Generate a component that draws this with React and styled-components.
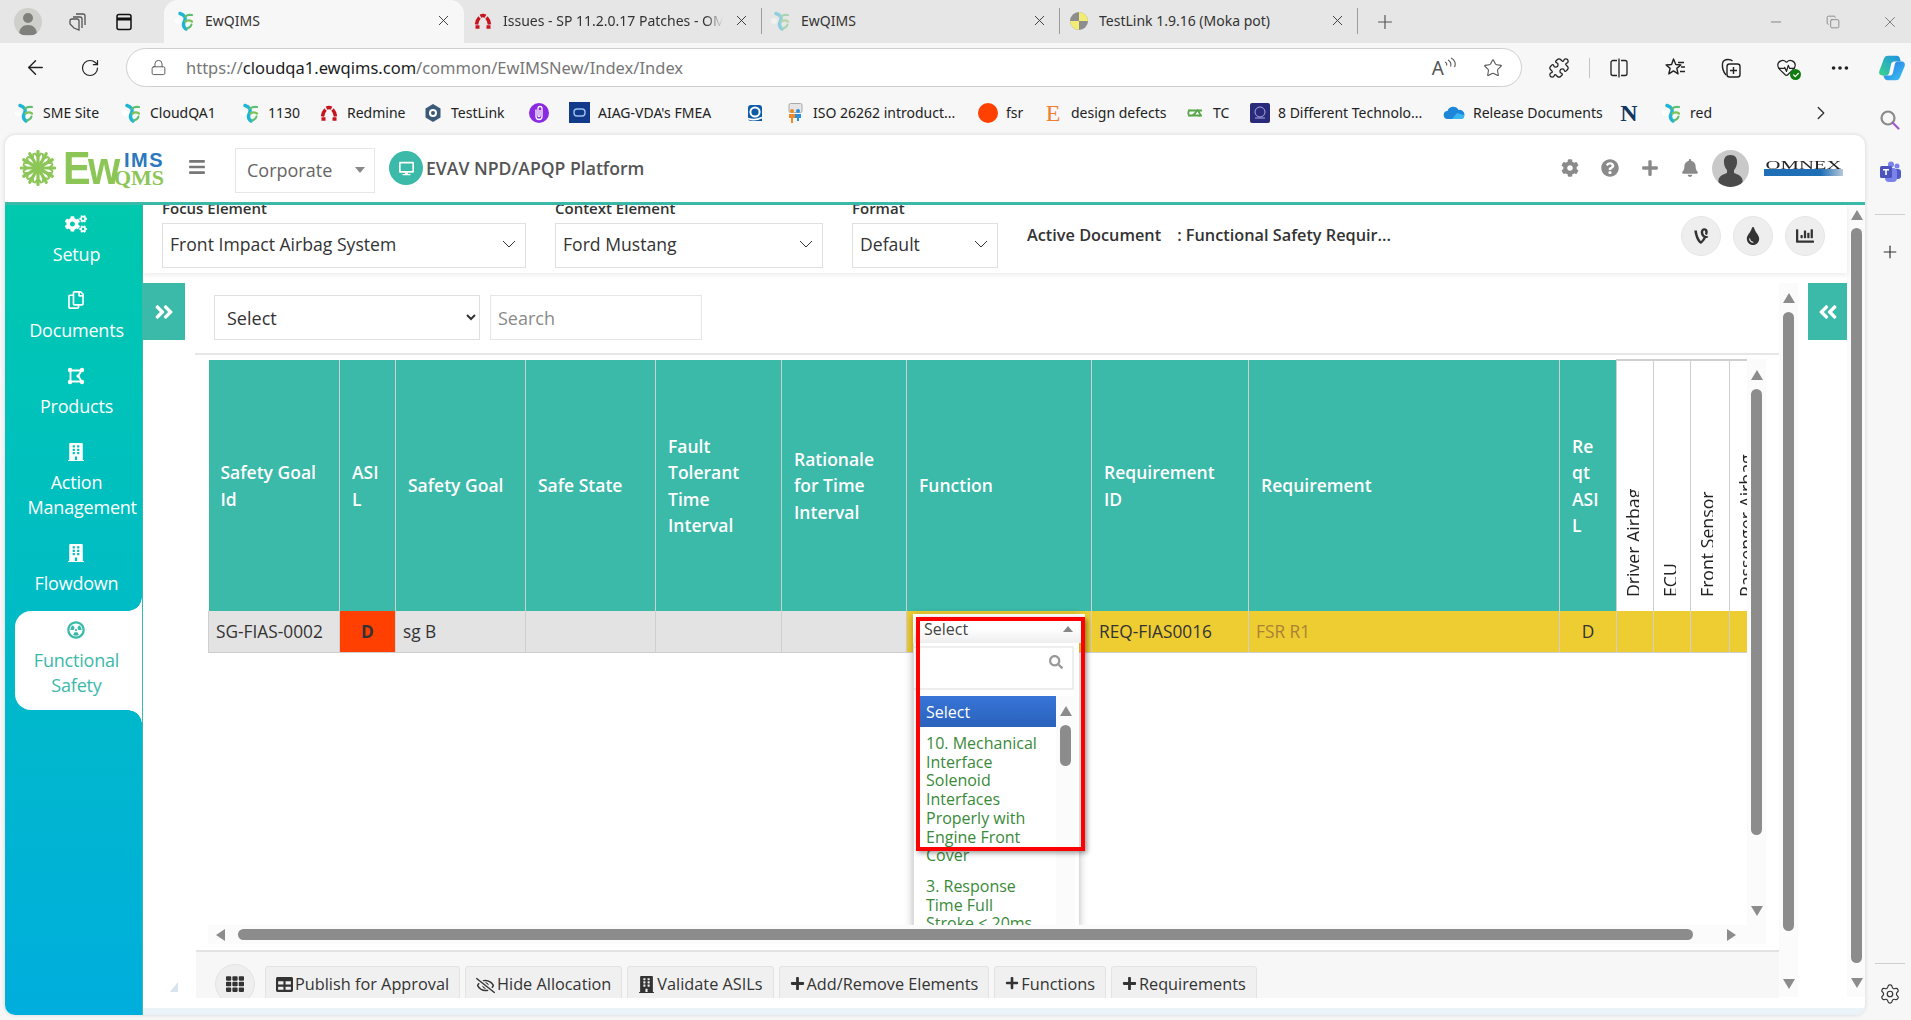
import React from "react";
import styled, { createGlobalStyle } from "styled-components";
import {
  ArrowLeft,
  RotateCw,
  Lock,
  Star,
  Puzzle,
  HeartPulse,
  MoreHorizontal,
  X,
  Plus,
  Minus,
  Copy,
  ChevronRight,
  Settings,
} from "lucide-react";
import {
  FaCogs,
  FaRegCopy,
  FaBuilding,
  FaRadiationAlt,
  FaAngleDoubleRight,
  FaAngleDoubleLeft,
  FaBars,
  FaDesktop,
  FaCog,
  FaQuestionCircle,
  FaPlus,
  FaBell,
  FaVine,
  FaTint,
  FaChartBar,
  FaTh,
  FaTable,
  FaRegEyeSlash,
  FaSearch,
  FaCheck,
} from "react-icons/fa";

const GlobalStyle = createGlobalStyle`
  html, body {
    margin: 0;
    padding: 0;
    background: #f7f7f7;
    overflow: hidden;
  }
  * { box-sizing: border-box; }
  body { font-family: "Open Sans", "Liberation Sans", sans-serif; }
`;

const TEAL = "#3bb9a9";

const Page = styled.div`
  width: 1911px;
  height: 1020px;
  display: flex;
  flex-direction: column;
  overflow: hidden;
  background: #f7f7f7;
`;

/* browser chrome */
const TabStrip = styled.div`
  height: 43px;
  display: flex;
  align-items: stretch;
  background: #e6e6e6;
  font-family: "Noto Sans", "Open Sans", sans-serif;
  font-size: 14px;
  color: #333;
`;
const StripTools = styled.div`
  width: 164px;
  display: flex;
  align-items: center;
  padding-left: 14px;
  gap: 24px;
  color: #555;
`;
const Avatar = styled.div`
  width: 28px;
  height: 28px;
  border-radius: 50%;
  background: #cfcfcb;
  display: flex;
  align-items: center;
  justify-content: center;
  overflow: hidden;
`;
const Tab = styled.div`
  width: ${(p) => (p.$active ? 300 : 298)}px;
  display: flex;
  align-items: center;
  padding: 0 12px 2px ${(p) => (p.$active ? 11 : 9)}px;
  gap: 10px;
  position: relative;
  background: ${(p) => (p.$active ? "#f7f7f7" : "transparent")};
  border-radius: ${(p) => (p.$active ? "14px 14px 0 0" : "0")};
  ${(p) =>
    p.$divider &&
    `
    &::after {
      content: "";
      position: absolute;
      right: 0;
      top: 8px;
      height: 26px;
      width: 1px;
      background: #9c9c9c;
    }
  `}
`;
const TabTitle = styled.div`
  flex: 1;
  white-space: nowrap;
  overflow: hidden;
  -webkit-mask-image: ${(p) => (p.$fade ? "linear-gradient(90deg, #000 92%, transparent)" : "none")};
`;
const Faded = styled.span`
  display: inline-flex;
  opacity: ${(p) => p.$opacity || 1};
`;
const NewTab = styled.div`
  display: flex;
  align-items: center;
  margin-left: 16px;
  color: #555;
`;
const WindowButtons = styled.div`
  margin-left: auto;
  display: flex;
  align-items: center;
  padding-right: 1px;
  gap: 17px;
  color: #7d7d7d;
`;
const WindowButton = styled.div`
  width: 40px;
  display: flex;
  justify-content: center;
`;

const AddressRow = styled.div`
  height: 51px;
  display: flex;
  align-items: flex-start;
  padding: 5px 0 0 22px;
  color: #222;
`;
const NavButton = styled.div`
  width: 26px;
  height: 39px;
  display: flex;
  align-items: center;
  justify-content: center;
  margin-left: ${(p) => p.$ml || 0}px;
`;
const UrlBar = styled.div`
  width: 1396px;
  height: 39px;
  margin-left: 23px;
  display: flex;
  align-items: center;
  padding: 0 18px 0 23px;
  background: #fff;
  border: 1px solid #cfcfcf;
  border-radius: 20px;
  font-family: "Noto Sans", "Open Sans", sans-serif;
  font-size: 16.5px;
  color: #777;
`;
const UrlText = styled.div`
  margin-left: 19px;
  flex: 1;
  white-space: nowrap;
  b { font-weight: 400; color: #1c1c1c; }
`;
const UrlAction = styled.div`
  display: flex;
  align-items: flex-start;
  margin-left: ${(p) => p.$ml || 0}px;
  color: #555;
  font-size: 19px;
  line-height: 22px;
`;
const ToolIcon = styled.div`
  width: 24px;
  height: 39px;
  display: flex;
  align-items: center;
  justify-content: center;
  position: relative;
  margin-left: ${(p) => p.$ml || 0}px;
  svg { flex: none; }
`;
const ToolDivider = styled.div`
  width: 1px;
  height: 20px;
  margin: 10px 17px 0 18px;
  background: #c4c4c4;
`;
const CheckBadge = styled.span`
  position: absolute;
  right: -3px;
  bottom: 7px;
  width: 11px;
  height: 11px;
  border-radius: 50%;
  background: #107c10;
  color: #fff;
  display: flex;
  align-items: center;
  justify-content: center;
  font-size: 6px;
`;

const BodyRow = styled.div`
  flex: 1;
  display: flex;
  min-height: 0;
`;
const LeftColumn = styled.div`
  width: 1865px;
  display: flex;
  flex-direction: column;
`;
const BookmarkBar = styled.div`
  height: 41px;
  display: flex;
  align-items: center;
  padding: 0 0 4px 15px;
  font-family: "Noto Sans", "Open Sans", sans-serif;
  font-size: 14px;
  color: #222;
`;
const Bookmark = styled.div`
  width: ${(p) => p.$w}px;
  display: flex;
  align-items: center;
  gap: 8px;
  white-space: nowrap;
`;
const BookmarkMore = styled.div`
  margin-left: 88px;
  display: flex;
  color: #333;
`;

const RightRail = styled.div`
  width: 46px;
  display: flex;
  flex-direction: column;
  align-items: center;
  padding: 15px 0 15px 4px;
`;
const RailIcon = styled.div`
  display: flex;
  margin-top: ${(p) => p.$mt || 0}px;
  color: #333;
`;
const RailRule = styled.div`
  width: 30px;
  height: 1px;
  background: #cfcfcf;
  margin-top: ${(p) => (p.$auto ? "auto" : "30px")};
  margin-bottom: ${(p) => (p.$auto ? "19px" : "0")};
`;

/* application window */
const AppWindow = styled.div`
  height: 880px;
  margin-left: 5px;
  background: #fff;
  border-radius: 10px;
  box-shadow: 0 0 4px rgba(0, 0, 0, 0.14);
  overflow: hidden;
  display: flex;
  flex-direction: column;
`;
const AppHeader = styled.header`
  height: 70px;
  flex: none;
  display: flex;
  align-items: center;
  padding-bottom: 1px;
  border-bottom: 3px solid ${TEAL};
`;
const Logo = styled.div`
  width: 150px;
  margin-left: 15px;
  display: flex;
  align-items: center;
`;
const LogoEw = styled.div`
  width: 53px;
  margin-left: 7px;
  font-family: "Liberation Sans", sans-serif;
  font-size: 46px;
  font-weight: 700;
  line-height: 40px;
  letter-spacing: -3px;
  color: #8cc657;
  transform: scaleX(0.9);
  transform-origin: left center;
`;
const LogoStack = styled.div`
  display: flex;
  flex-direction: column;
  align-items: flex-end;
  width: 48px;
  margin-top: 1px;
`;
const LogoIms = styled.div`
  font-family: "Liberation Sans", sans-serif;
  font-size: 20px;
  font-weight: 700;
  line-height: 17px;
  letter-spacing: 1.5px;
  color: #2b78bd;
`;
const LogoQms = styled.div`
  font-family: "Liberation Serif", serif;
  font-size: 22px;
  font-weight: 700;
  line-height: 17px;
  color: #8cc657;
  white-space: nowrap;
`;
const Hamburger = styled.div`
  display: flex;
  margin: -2px 0 0 18px;
  color: #777;
  font-size: 18px;
`;
const CorporateSelect = styled.div`
  width: 140px;
  height: 45px;
  margin: 4px 0 0 29px;
  display: flex;
  align-items: center;
  justify-content: space-between;
  padding: 0 9px 0 11px;
  border: 1px solid #e6e6e6;
  font-size: 18px;
  color: #666;
`;
const Caret = styled.span`
  width: 0;
  height: 0;
  border-left: 5px solid transparent;
  border-right: 5px solid transparent;
  border-top: 6px solid #888;
`;
const PlatformIcon = styled.div`
  width: 34px;
  height: 34px;
  margin-left: 14px;
  border-radius: 50%;
  background: ${TEAL};
  color: #fff;
  display: flex;
  align-items: center;
  justify-content: center;
  font-size: 15px;
`;
const PlatformName = styled.div`
  margin-left: 3px;
  font-size: 17.6px;
  font-weight: 600;
  color: #555;
  white-space: nowrap;
`;
const HeaderTools = styled.div`
  margin-left: auto;
  display: flex;
  align-items: center;
  padding-right: 22px;
  color: #8a8a8a;
`;
const HeaderTool = styled.div`
  width: 40px;
  display: flex;
  justify-content: center;
  font-size: 18px;
`;
const UserPic = styled.div`
  width: 37px;
  height: 37px;
  margin: 0 15px 0 2px;
  border-radius: 50%;
  background: #c9c9c9;
  overflow: hidden;
  display: flex;
`;
const Omnex = styled.div`
  width: 79px;
  display: flex;
  flex-direction: column;
  align-items: stretch;
`;
const OmnexName = styled.div`
  font-family: "Liberation Serif", serif;
  font-size: 11.5px;
  line-height: 8px;
  color: #222;
  text-align: center;
  white-space: nowrap;
  transform: scaleX(1.8);
`;
const OmnexBar = styled.div`
  height: 7px;
  flex: none;
  background: linear-gradient(90deg, #1f6fb7 72%, #b7c9d8);
`;

const AppBody = styled.div`
  flex: 1;
  min-height: 0;
  display: flex;
`;

/* sidebar */
const Sidebar = styled.nav`
  width: 138px;
  flex: none;
  display: flex;
  flex-direction: column;
  background: linear-gradient(180deg, #00c9ae 0%, #00aedd 100%);
  border-right: 1px solid ${TEAL};
  color: #fff;
`;
const NavItem = styled.div`
  position: relative;
  display: flex;
  flex-direction: column;
  align-items: center;
  padding: 9px 16px ${(p) => (p.$active ? 12 : 14)}px 22px;
  margin-left: ${(p) => (p.$active ? 10 : 0)}px;
  background: ${(p) => (p.$active ? "#fff" : "transparent")};
  color: ${(p) => (p.$active ? TEAL : "#fff")};
  border-radius: ${(p) => (p.$active ? "16px 0 0 16px" : "0")};
  margin-top: ${(p) => (p.$active ? 1 : 0)}px;
  ${(p) =>
    p.$active &&
    `
    padding-left: 12px;
    &::before, &::after {
      content: "";
      position: absolute;
      right: 0;
      width: 14px;
      height: 14px;
    }
    &::before {
      top: -14px;
      background: radial-gradient(circle at 0 0, transparent 13.5px, #fff 14px);
    }
    &::after {
      bottom: -14px;
      background: radial-gradient(circle at 0 100%, transparent 13.5px, #fff 14px);
    }
  `}
`;
const NavGlyph = styled.div`
  height: 20px;
  display: flex;
  align-items: center;
  justify-content: center;
  font-size: ${(p) => p.$size || 18}px;
  margin-right: 2px;
`;
const NavLabel = styled.div`
  width: 98px;
  margin-top: 8px;
  font-size: 18px;
  line-height: 25px;
  text-align: center;
  letter-spacing: -0.2px;
`;

/* main area */
const Main = styled.main`
  flex: 1;
  min-width: 0;
  display: flex;
  flex-direction: column;
`;
const MainRow = styled.div`
  flex: 1;
  min-height: 0;
  display: flex;
`;
const MainInner = styled.div`
  width: 1704px;
  display: flex;
  flex-direction: column;
`;
const BottomStrip = styled.div`
  height: 7px;
  flex: none;
  background: #eaf3f7;
`;
const FilterBar = styled.div`
  height: 68px;
  flex: none;
  display: flex;
  align-items: flex-start;
  padding: 0 22px 0 19px;
  overflow: hidden;
  box-shadow: 0 2px 5px rgba(0, 0, 0, 0.08);
  position: relative;
  z-index: 1;
`;
const FilterGroup = styled.div`
  width: ${(p) => p.$w}px;
  margin-right: ${(p) => p.$mr || 29}px;
`;
const FilterLabel = styled.div`
  height: 22px;
  margin-top: -4px;
  font-size: 15px;
  line-height: 14px;
  font-weight: 600;
  color: #333;
  white-space: nowrap;
`;
const FilterSelect = styled.div`
  height: 45px;
  display: flex;
  align-items: center;
  justify-content: space-between;
  padding: 0 9px 3px 7px;
  border: 1px solid #e0e0e0;
  font-size: 17.6px;
  color: #333;
  white-space: nowrap;
`;
const ActiveDoc = styled.div`
  display: flex;
  margin-top: 18px;
  font-size: 16.3px;
  line-height: 24px;
  font-weight: 600;
  color: #333;
  white-space: nowrap;
`;
const ActiveName = styled.span`
  margin-left: 16px;
`;
const RoundTools = styled.div`
  margin-left: auto;
  margin-top: 11px;
  display: flex;
  gap: 12px;
`;
const RoundTool = styled.div`
  width: 40px;
  height: 40px;
  border-radius: 50%;
  background: #eee;
  border: 1px solid #e6e6e6;
  color: #333;
  display: flex;
  align-items: center;
  justify-content: center;
  font-size: 18px;
`;

const WorkRow = styled.div`
  flex: 1;
  min-height: 0;
  display: flex;
  position: relative;
`;
const Toggle = styled.div`
  width: ${(p) => p.$w}px;
  height: 57px;
  margin: 10px 0 0 ${(p) => p.$ml || 0}px;
  flex: none;
  background: ${TEAL};
  color: #fff;
  display: flex;
  align-items: center;
  justify-content: center;
  font-size: 22px;
`;
const ResizeGrip = styled.div`
  position: absolute;
  left: 27px;
  top: 709px;
  width: 0;
  height: 0;
  border-bottom: 10px solid #d6e4ee;
  border-left: 8px solid transparent;
`;
const Panel = styled.div`
  width: 1594px;
  flex: none;
  display: flex;
  flex-direction: column;
`;
const SearchRow = styled.div`
  height: 82px;
  flex: none;
  margin-left: 10px;
  display: flex;
  align-items: flex-start;
  gap: 10px;
  padding: 22px 0 0 19px;
  border-bottom: 2px solid #e6e6e6;
`;
const NativeSelect = styled.select`
  width: 266px;
  height: 45px;
  padding: 0 6px 0 8px;
  border: 1px solid #e0e0e0;
  background: #fff;
  border-radius: 0;
  font-family: "Open Sans", sans-serif;
  font-size: 18px;
  color: #333;
`;
const SearchInput = styled.input`
  width: 212px;
  height: 45px;
  padding: 0 7px;
  border: 1px solid #e6e6e6;
  outline: none;
  font-family: "Open Sans", sans-serif;
  font-size: 18px;
  &::placeholder { color: #8a8a8a; }
`;
const GridArea = styled.div`
  margin: 4px 0 0 23px;
  width: 1558px;
`;
const GridBody = styled.div`
  height: 566px;
  display: flex;
`;
const TableClip = styled.div`
  width: 1539px;
  flex: none;
  overflow: hidden;
`;
const Table = styled.table`
  width: 1581px;
  table-layout: fixed;
  border-collapse: collapse;
`;
const HeadCell = styled.th`
  height: 251px;
  padding: ${(p) => (p.$turned ? "0 0 14px" : "0 12px")};
  background: ${(p) => (p.$turned ? "#fff" : TEAL)};
  border: 1px solid #cfcfcf;
  border-width: ${(p) => (p.$turned ? "2px 1px 0" : "0 1px 0")};
  color: ${(p) => (p.$turned ? "#222" : "#fff")};
  font-size: 17.5px;
  line-height: 26.5px;
  font-weight: 600;
  text-align: left;
  vertical-align: ${(p) => (p.$turned ? "bottom" : "middle")};
  &:first-child { border-left: 0; }
`;
const TurnedText = styled.div`
  writing-mode: vertical-rl;
  transform: rotate(180deg);
  height: 144px;
  width: 16px;
  margin-left: 6px;
  line-height: 20px;
  font-size: 17.7px;
  font-weight: 500;
  overflow: hidden;
  white-space: nowrap;
  text-align: left;
`;
const tones = { plain: "#e3e3e3", hot: "#ff4000", warn: "#eecd33" };
const BodyCell = styled.td`
  height: 41px;
  padding: 0 ${(p) => (p.$center ? 0 : 7)}px;
  background: ${(p) => tones[p.$tone]};
  border: 1px solid #cfcfcf;
  border-top: 0;
  color: ${(p) => p.$color || "#333"};
  font-size: 17.3px;
  font-weight: ${(p) => (p.$strong ? 700 : 400)};
  text-align: ${(p) => (p.$center ? "center" : "left")};
  white-space: nowrap;
  position: relative;
  &:first-child { border-left: 1px solid #cfcfcf; }
`;

/* open dropdown in the Function cell */
const Chosen = styled.div`
  position: absolute;
  left: 6px;
  top: 3px;
  width: 166px;
  z-index: 3;
  box-shadow: 0 2px 8px rgba(0, 0, 0, 0.3);
  background: #fff;
  font-size: 16px;
  font-weight: 400;
  color: #444;
`;
const ChosenHead = styled.div`
  height: 29px;
  display: flex;
  align-items: center;
  justify-content: space-between;
  padding: 0 12px 0 11px;
  width: 172px;
  background: linear-gradient(#fff 50%, #eee);
`;
const ChosenCaret = styled.span`
  border-left: 5px solid transparent;
  border-right: 5px solid transparent;
  border-bottom: 6px solid #888;
`;
const ChosenPanel = styled.div`
  width: 166px;
  height: 285px;
  background: #fff;
  border-left: 1px solid #ddd;
  overflow: hidden;
`;
const ChosenSearch = styled.div`
  width: 160px;
  height: 44px;
  margin-top: 3px;
  border: 2px solid #eee;
  border-left: 0;
  display: flex;
  justify-content: flex-end;
  padding: 7px 9px 0 0;
  color: #999;
  font-size: 14px;
`;
const ChosenLists = styled.div`
  display: flex;
  margin-top: 6px;
`;
const OptionList = styled.div`
  width: 138px;
  margin-left: 4px;
  flex: none;
`;
const Highlight = styled.div`
  height: 31px;
  display: flex;
  align-items: center;
  padding-left: 8px;
  background: linear-gradient(#3875d7, #2a62bc);
  color: #fff;
`;
const Option = styled.div`
  width: 124px;
  padding: 7px 0 5px 8px;
  font-size: 16px;
  line-height: 18.7px;
  color: #3a8a3a;
  white-space: normal;
`;
const ListScroll = styled.div`
  width: 19px;
  display: flex;
  flex-direction: column;
  align-items: center;
  background: #fbfbfb;
  padding-top: 10px;
`;
const RedBox = styled.div`
  position: absolute;
  left: 9px;
  top: 6px;
  width: 169px;
  height: 234px;
  z-index: 4;
  border: 4px solid #f00;
  box-shadow: 2px 2px 5px rgba(0, 0, 0, 0.4);
`;

/* scrollbars */
const VTrack = styled.div`
  width: 19px;
  height: ${(p) => p.$h}px;
  flex: none;
  display: flex;
  flex-direction: column;
  align-items: center;
  padding-top: ${(p) => p.$pad}px;
  background: #fbfbfb;
  margin-top: ${(p) => p.$mt || 0}px;
`;
const ArrowUp = styled.span`
  flex: none;
  border-left: 6.5px solid transparent;
  border-right: 6.5px solid transparent;
  border-bottom: 10px solid #8c8c8c;
`;
const ArrowDown = styled.span`
  flex: none;
  margin-top: ${(p) => p.$mt}px;
  border-left: 6.5px solid transparent;
  border-right: 6.5px solid transparent;
  border-top: 10px solid #8c8c8c;
`;
const VThumb = styled.div`
  width: 11px;
  height: ${(p) => p.$h}px;
  margin-top: ${(p) => p.$mt || 8}px;
  flex: none;
  border-radius: 6px;
  background: #8c8c8c;
`;
const HTrack = styled.div`
  width: 1558px;
  height: 19px;
  display: flex;
  align-items: center;
  padding-left: 8px;
  background: #fbfbfb;
`;
const ArrowLeftHead = styled.span`
  border-top: 6.5px solid transparent;
  border-bottom: 6.5px solid transparent;
  border-right: 9px solid #8c8c8c;
`;
const ArrowRightHead = styled.span`
  margin-left: 34px;
  border-top: 6.5px solid transparent;
  border-bottom: 6.5px solid transparent;
  border-left: 9px solid #8c8c8c;
`;
const HThumb = styled.div`
  width: 1455px;
  height: 11px;
  margin-left: 13px;
  border-radius: 6px;
  background: #8c8c8c;
`;

/* bottom toolbar */
const Toolbar = styled.div`
  height: 48px;
  margin: 6px 0 0 11px;
  flex: none;
  display: flex;
  align-items: flex-start;
  gap: 5px;
  padding: 14px 0 0 19px;
  border-top: 2px solid #e3e3e3;
  background: #f7f7f7;
  overflow: hidden;
`;
const GridButton = styled.div`
  width: 40px;
  height: 40px;
  margin: -2px 5px 0 0;
  flex: none;
  border-radius: 50%;
  border: 1px solid #e3e3e3;
  background: #eee;
  color: #333;
  display: flex;
  align-items: center;
  justify-content: center;
  font-size: 18px;
`;
const ToolButton = styled.div`
  height: 40px;
  padding: 5px 10px 0 10px;
  flex: none;
  display: flex;
  align-items: flex-start;
  gap: 2px;
  border: 1px solid #e3e3e3;
  border-radius: 3px;
  background: #f0f0f0;
  color: #333;
  font-size: 16.3px;
  line-height: 24px;
  white-space: nowrap;
  svg { margin-top: 4px; flex: none; }
`;

/* small drawings */
const EwFavicon = ({ size = 20 }) => (
  <svg width={size} height={size} viewBox="0 0 20 20" fill="none" strokeLinecap="round">
    <circle cx="3" cy="10" r="3" fill="#fff" />
    <path d="M5 2.500C10 4 11 7 9.500 10S8 16 11 18" stroke="#1fb6d6" strokeWidth="3.400" />
    <path d="M10 5.500c2-1.600 4.500-2 7-1.500" stroke="#5fbf70" strokeWidth="2.200" />
    <path d="M10.500 10.500c2-1.400 4.500-1.400 6.500 0" stroke="#7cc35a" strokeWidth="2.200" />
    <path d="M12 17.500c2.400-.5 4-2 4.500-4" stroke="#5fbf70" strokeWidth="2" />
  </svg>
);
const RedmineIcon = () => (
  <svg width="20" height="20" viewBox="0 0 20 20" fill="none" stroke="#c8141e" strokeWidth="3.400">
    <path d="M2.500 16h4M13.500 16h4" />
    <path d="M3.500 13.500C4 10 5 8 6.500 6.500M16.500 13.500C16 10 15 8 13.500 6.500M7.500 5.200c1.600-1 3.400-1 5 0" />
  </svg>
);
const TestLinkIcon = () => (
  <svg width="20" height="20" viewBox="0 0 20 20">
    <path d="M10 1l7.500 4.500v9L10 19l-7.500-4.500v-9z" fill="#3b5a7a" />
    <circle cx="10" cy="10" r="4" fill="#fff" />
    <circle cx="10" cy="10" r="2" fill="#3b5a7a" />
  </svg>
);
const ClipIcon = () => (
  <svg width="20" height="20" viewBox="0 0 20 20" fill="none">
    <circle cx="10" cy="10" r="10" fill="#8a2be2" />
    <path d="M7 6.500v7a3 3 0 0 0 6 0v-8a2 2 0 0 0-4 0v7a1 1 0 0 0 2 0V7" stroke="#fff" strokeWidth="1.300" />
  </svg>
);
const QdIcon = () => (
  <svg width="21" height="21" viewBox="0 0 21 21">
    <rect width="21" height="21" fill="#123a8a" />
    <rect x="5" y="7" width="11" height="7" rx="3" fill="none" stroke="#9fc0ee" strokeWidth="1.400" />
  </svg>
);
const RoundQIcon = () => (
  <svg width="20" height="20" viewBox="0 0 20 20" fill="none">
    <path d="M3 5a3 3 0 0 1 3-3h8a3 3 0 0 1 3 3v13H6a3 3 0 0 1-3-3z" fill="#0d5aa7" />
    <circle cx="10" cy="9" r="4.600" stroke="#fff" strokeWidth="2" />
    <path d="M3 15.500c5 2 9 1.500 14-1" stroke="#fff" strokeWidth="1.600" />
  </svg>
);
const IsoIcon = () => (
  <svg width="20" height="20" viewBox="0 0 20 20">
    <rect x="4" y="0.500" width="13" height="9" rx="1.500" fill="#e5e5e5" stroke="#aaa" />
    <circle cx="7" cy="8" r="2" fill="#f08a24" />
    <path d="M4 11h6v4H8v5H6v-5H4z" fill="#f08a24" />
    <circle cx="13" cy="8" r="2" fill="#2a8fd8" />
    <path d="M10 11h6v4h-2v3h-2v-3h-2z" fill="#2a8fd8" />
  </svg>
);
const DotIcon = () => (
  <svg width="20" height="20" viewBox="0 0 20 20">
    <circle cx="10" cy="10" r="10" fill="#ff4000" />
  </svg>
);
const SerifMark = styled.span`
  width: 20px;
  text-align: center;
  font-family: "Liberation Serif", serif;
  font-size: 24px;
  line-height: 20px;
  color: ${(p) => p.$color};
  font-weight: ${(p) => p.$weight || 400};
`;
const CloverIcon = () => (
  <svg width="20" height="20" viewBox="0 0 20 20" fill="none" stroke="#5aa84a" strokeWidth="1.800">
    <path d="M3 7.500h14M3 12.500h14M7 7.500c-5-2-5 7 0 5s5-7 6-5 5 7 0 5" />
  </svg>
);
const BookIcon = () => (
  <svg width="20" height="20" viewBox="0 0 20 20" fill="none">
    <rect width="20" height="20" rx="2" fill="#2a2a7a" />
    <circle cx="10" cy="9" r="5" stroke="#a7a7e8" />
    <path d="M5 15h10" stroke="#a7a7e8" />
  </svg>
);
const CloudIcon = () => (
  <svg width="22" height="20" viewBox="0 0 22 20">
    <path d="M5 16a4 4 0 0 1-.5-8A6 6 0 0 1 15.500 7 4.600 4.600 0 0 1 18 16z" fill="#1c86d8" />
    <path d="M9 16l5-6 7 2a3 3 0 0 1-2 4z" fill="#37b6f0" />
  </svg>
);
const CopilotIcon = () => (
  <svg width="30" height="28" viewBox="0 0 30 30">
    <defs>
      <linearGradient id="cpA" x1="0" y1="1" x2="1" y2="0">
        <stop offset="0" stopColor="#39d48a" />
        <stop offset="1" stopColor="#1f8fe8" />
      </linearGradient>
      <linearGradient id="cpB" x1="0" y1="0" x2="1" y2="1">
        <stop offset="0" stopColor="#2a6fe8" />
        <stop offset="1" stopColor="#38c8f0" />
      </linearGradient>
    </defs>
    <path d="M11 2h9c2 0 3 1 3.500 3l1 3h-7c-2 0-3 1-3.500 3l-2 9c-.5 2-1.500 3-3.500 3H5c-3 0-4.500-2-3.500-5L6 6c1-3 2.500-4 5-4z" fill="url(#cpA)" />
    <path d="M19 28h-9c-2 0-3-1-3.500-3l-1-2h7c2 0 3-1 3.500-3l2-9c.5-2 1.500-3 3.500-3H25c3 0 4.500 2 3.500 5L24 24c-1 3-2.500 4-5 4z" fill="url(#cpB)" />
  </svg>
);
const SplitIcon = () => (
  <svg width="22" height="22" viewBox="0 0 22 22" fill="none" stroke="#222" strokeWidth="1.300">
    <path d="M9 3.500H5a2 2 0 0 0-2 2v11a2 2 0 0 0 2 2h4M13 3.500h4a2 2 0 0 1 2 2v11a2 2 0 0 1-2 2h-4M11 1.500v19" />
  </svg>
);
const FavoritesIcon = () => (
  <svg width="24" height="24" viewBox="0 0 24 24" fill="none" stroke="#222" strokeWidth="1.400">
    <path d="M10.500 3l2.300 5.500 5 .4-4 3.500 1.300 5.400-4.600-2.900-4.700 3 1.300-5.500-4-3.400 5.500-.5z" strokeLinejoin="round" />
    <path d="M15 6.500h6M18 11h4M17 15.500h5" />
  </svg>
);
const CollectionsIcon = () => (
  <svg width="24" height="24" viewBox="0 0 24 24" fill="none" stroke="#222" strokeWidth="1.400">
    <path d="M7 19C4.500 16 3 12 3.500 7.500 4 4.500 6 3.500 9 3.500c2 0 3.500.5 4.500 1.500" />
    <rect x="8" y="8" width="13" height="13" rx="2.500" />
    <path d="M14.500 11v7M11 14.500h7" />
  </svg>
);
const WorkspaceIcon = () => (
  <svg width="24" height="24" viewBox="0 0 24 24" fill="none" stroke="#555" strokeWidth="1.300">
    <path d="M10 4h7a2 2 0 0 1 2 2v9" />
    <path d="M7 7h7a2 2 0 0 1 2 2v9" />
    <path d="M4 11a2 2 0 0 1 2-2h5a2 2 0 0 1 2 2v9l-5-2-4-4z" />
  </svg>
);
const TabsIcon = () => (
  <svg width="20" height="20" viewBox="0 0 20 20" fill="none" stroke="#111" strokeWidth="1.500">
    <rect x="3" y="2.500" width="14" height="15" rx="2" />
    <path d="M3 7h14" strokeWidth="3" />
  </svg>
);
const TestLinkTabIcon = () => (
  <svg width="20" height="20" viewBox="0 0 20 20">
    <circle cx="10" cy="10" r="9" fill="#8d8d8d" />
    <path d="M10 1a9 9 0 0 1 9 9h-9zM1 10h9v9a9 9 0 0 1-9-9z" fill="#f0ec76" />
  </svg>
);
const ProfileIcon = () => (
  <svg width="28" height="28" viewBox="0 0 28 28" fill="#7f7f7b">
    <circle cx="14" cy="10" r="5" />
    <path d="M5 27c0-7 4-10 9-10s9 3 9 10z" />
  </svg>
);
const ProductsGlyph = () => (
  <svg width="18" height="18" viewBox="0 0 18 18" fill="none" stroke="#fff" strokeWidth="1.800">
    <path d="M3.500 3.500h11c-1.500 3-1.500 3-3.500 5.500 2 2 2 3 3.500 5.500h-11z" />
    <g fill="#fff" stroke="none">
      <circle cx="3" cy="3" r="2.200" />
      <circle cx="15" cy="3" r="2.200" />
      <circle cx="3" cy="15" r="2.200" />
      <circle cx="15" cy="15" r="2.200" />
      <circle cx="11" cy="9" r="1.600" />
    </g>
  </svg>
);
const SunMark = () => (
  <svg width="36" height="36" viewBox="0 0 36 36" stroke="#8cc657" strokeLinecap="round" fill="none">
    {[0, 30, 60, 90, 120, 150].map((a) => (
      <g key={a} transform={`rotate(${a} 18 18)`}>
        <path d="M18 1.500v33" strokeWidth="3.200" />
        <path d="M15 3.500L18 7l3-3.500M15 32.500L18 29l3 3.500" strokeWidth="2" />
      </g>
    ))}
    <circle cx="18" cy="18" r="5.500" fill="#8cc657" stroke="none" />
  </svg>
);
const UserGlyph = () => (
  <svg width="37" height="37" viewBox="0 0 37 37" fill="#4a4a4a">
    <path d="M18.500 5c-5 0-7 3.500-6.500 8 .3 3 1.500 5.500 3 7v3c-4 1.500-8 3-8.500 7-.2 2 0 7 0 7h24s.2-5 0-7c-.5-4-4.500-5.500-8.500-7v-3c1.500-1.500 2.700-4 3-7 .5-4.500-1.500-8-6.500-8z" />
  </svg>
);
const TeamsIcon = () => (
  <svg width="24" height="24" viewBox="0 0 24 24">
    <circle cx="19" cy="6" r="2.500" fill="#7b83eb" />
    <circle cx="13" cy="4.500" r="3" fill="#7b83eb" />
    <rect x="15" y="9" width="8" height="10" rx="3" fill="#5059c9" />
    <rect x="7" y="8" width="12" height="14" rx="4" fill="#7b83eb" />
    <rect x="2" y="6" width="12" height="12" rx="1.500" fill="#4b53bc" />
    <path d="M5 9h6v1.500H8.800V15H7.200v-4.500H5z" fill="#fff" />
  </svg>
);
const RailSearch = () => (
  <svg width="22" height="22" viewBox="0 0 22 22" fill="none" strokeWidth="2.200" strokeLinecap="round">
    <circle cx="9" cy="9" r="6.500" stroke="#8a8a8a" />
    <path d="M14 14l5.500 5.500" stroke="#a05bc9" />
  </svg>
);
const ReadAloudWaves = () => (
  <svg width="12" height="14" viewBox="0 0 12 14" fill="none" stroke="#555" strokeWidth="1.100">
    <path d="M1 5c1.500.5 2 2 1.500 3.500M4 3c2.500 1 3.500 4 2.500 6.500M7 1c4 1.500 5 6 3.500 9" />
  </svg>
);
const SelectChevron = () => (
  <svg width="14" height="8" viewBox="0 0 14 8" fill="none" stroke="#333">
    <path d="M1 1l6 6 6-6" />
  </svg>
);

const tabs = [
  { title: "EwQIMS", icon: <EwFavicon />, active: true },
  { title: "Issues - SP 11.2.0.17 Patches - OMNEX", icon: <RedmineIcon />, fade: true, divider: true },
  { title: "EwQIMS", icon: <Faded $opacity={0.45}><EwFavicon /></Faded>, divider: true },
  { title: "TestLink 1.9.16 (Moka pot)", icon: <TestLinkTabIcon />, divider: true },
];

const bookmarks = [
  { label: "SME Site", w: 107, icon: <EwFavicon /> },
  { label: "CloudQA1", w: 118, icon: <EwFavicon /> },
  { label: "1130", w: 79, icon: <EwFavicon /> },
  { label: "Redmine", w: 104, icon: <RedmineIcon /> },
  { label: "TestLink", w: 106, icon: <TestLinkIcon /> },
  { label: "", w: 40, icon: <ClipIcon /> },
  { label: "AIAG-VDA's FMEA", w: 176, icon: <QdIcon /> },
  { label: "", w: 40, icon: <RoundQIcon /> },
  { label: "ISO 26262 introduct...", w: 193, icon: <IsoIcon /> },
  { label: "fsr", w: 65, icon: <DotIcon /> },
  { label: "design defects", w: 142, icon: <SerifMark $color="#f08030">E</SerifMark> },
  { label: "TC", w: 65, icon: <CloverIcon /> },
  { label: "8 Different Technolo...", w: 193, icon: <BookIcon /> },
  { label: "Release Documents", w: 176, icon: <CloudIcon /> },
  { label: "", w: 43, icon: <SerifMark $color="#12365f" $weight={700}>N</SerifMark> },
  { label: "red", w: 60, icon: <EwFavicon /> },
];

const navItems = [
  { label: "Setup", icon: <FaCogs />, size: 22 },
  { label: "Documents", icon: <FaRegCopy /> },
  { label: "Products", icon: <ProductsGlyph /> },
  { label: "Action Management", icon: <FaBuilding /> },
  { label: "Flowdown", icon: <FaBuilding /> },
  { label: "Functional Safety", icon: <FaRadiationAlt />, active: true },
];

const columns = [
  { width: 131, title: <>Safety Goal<br />Id</> },
  { width: 56, title: <>ASI<br />L</> },
  { width: 130, title: "Safety Goal" },
  { width: 130, title: "Safe State" },
  { width: 126, title: <>Fault<br />Tolerant<br />Time<br />Interval</> },
  { width: 125, title: <>Rationale<br />for Time<br />Interval</> },
  { width: 185, title: "Function" },
  { width: 157, title: <>Requirement<br />ID</> },
  { width: 311, title: "Requirement" },
  { width: 57, title: <>Re<br />qt<br />ASI<br />L</> },
  { width: 37, title: "Driver Airbag", turned: true },
  { width: 37, title: "ECU", turned: true },
  { width: 39, title: "Front Sensor", turned: true },
  { width: 60, title: "Passenger Airbag", turned: true },
];

const toolButtons = [
  { label: "Publish for Approval", icon: <FaTable size={17} /> },
  { label: "Hide Allocation", icon: <FaRegEyeSlash size={19} /> },
  { label: "Validate ASILs", icon: <FaBuilding size={17} /> },
  { label: "Add/Remove Elements", icon: <FaPlus size={15} /> },
  { label: "Functions", icon: <FaPlus size={14} /> },
  { label: "Requirements", icon: <FaPlus size={15} /> },
];

const FunctionDropdown = () => (
  <>
    <Chosen>
      <ChosenHead>
        Select
        <ChosenCaret />
      </ChosenHead>
      <ChosenPanel>
        <ChosenSearch>
          <FaSearch />
        </ChosenSearch>
        <ChosenLists>
          <OptionList>
            <Highlight>Select</Highlight>
            <Option>10. Mechanical Interface Solenoid Interfaces Properly with Engine Front Cover</Option>
            <Option>3. Response Time Full Stroke &lt; 20ms</Option>
          </OptionList>
          <ListScroll>
            <ArrowUp />
            <VThumb $h={41} $mt={9} />
          </ListScroll>
        </ChosenLists>
      </ChosenPanel>
    </Chosen>
    <RedBox />
  </>
);

const App = () => {
  return (
    <Page>
      <GlobalStyle />
      <TabStrip>
        <StripTools>
          <Avatar>
            <ProfileIcon />
          </Avatar>
          <WorkspaceIcon />
          <TabsIcon />
        </StripTools>
        {tabs.map((t, i) => (
          <Tab key={i} $active={t.active} $divider={t.divider}>
            {t.icon}
            <TabTitle $fade={t.fade}>{t.title}</TabTitle>
            <X size={17} strokeWidth={1.3} color="#333" />
          </Tab>
        ))}
        <NewTab>
          <Plus size={22} strokeWidth={1.3} />
        </NewTab>
        <WindowButtons>
          <WindowButton><Minus size={16} strokeWidth={1.4} /></WindowButton>
          <WindowButton><Copy size={14} strokeWidth={1.4} /></WindowButton>
          <WindowButton><X size={18} strokeWidth={1.3} /></WindowButton>
        </WindowButtons>
      </TabStrip>

      <AddressRow>
        <NavButton><ArrowLeft size={23} strokeWidth={1.5} /></NavButton>
        <NavButton $ml={29}><RotateCw size={20} strokeWidth={1.4} /></NavButton>
        <UrlBar>
          <Lock size={17} strokeWidth={1.3} color="#555" />
          <UrlText>
            https://<b>cloudqa1.ewqims.com</b>/common/EwIMSNew/Index/Index
          </UrlText>
          <UrlAction>A<ReadAloudWaves /></UrlAction>
          <UrlAction $ml={27}><Star size={20} strokeWidth={1.3} /></UrlAction>
        </UrlBar>
        <ToolIcon $ml={25}><Puzzle size={22} strokeWidth={1.4} /></ToolIcon>
        <ToolDivider />
        <ToolIcon><SplitIcon /></ToolIcon>
        <ToolIcon $ml={32}><FavoritesIcon /></ToolIcon>
        <ToolIcon $ml={32}><CollectionsIcon /></ToolIcon>
        <ToolIcon $ml={31}>
          <HeartPulse size={21} strokeWidth={1.4} />
          <CheckBadge><FaCheck /></CheckBadge>
        </ToolIcon>
        <ToolIcon $ml={30}><MoreHorizontal size={22} strokeWidth={2} /></ToolIcon>
        <ToolIcon $ml={28}><CopilotIcon /></ToolIcon>
      </AddressRow>

      <BodyRow>
        <LeftColumn>
          <BookmarkBar>
            {bookmarks.map((b, i) => (
              <Bookmark key={i} $w={b.w}>
                {b.icon}
                {b.label}
              </Bookmark>
            ))}
            <BookmarkMore>
              <ChevronRight size={22} strokeWidth={1.5} />
            </BookmarkMore>
          </BookmarkBar>

          <AppWindow>
            <AppHeader>
              <Logo>
                <SunMark />
                <LogoEw>Ew</LogoEw>
                <LogoStack>
                  <LogoIms>IMS</LogoIms>
                  <LogoQms>QMS</LogoQms>
                </LogoStack>
              </Logo>
              <Hamburger><FaBars /></Hamburger>
              <CorporateSelect>
                Corporate
                <Caret />
              </CorporateSelect>
              <PlatformIcon><FaDesktop /></PlatformIcon>
              <PlatformName>EVAV NPD/APQP Platform</PlatformName>
              <HeaderTools>
                <HeaderTool><FaCog /></HeaderTool>
                <HeaderTool><FaQuestionCircle /></HeaderTool>
                <HeaderTool><FaPlus /></HeaderTool>
                <HeaderTool><FaBell /></HeaderTool>
                <UserPic><UserGlyph /></UserPic>
                <Omnex>
                  <OmnexName>OMNEX</OmnexName>
                  <OmnexBar />
                </Omnex>
              </HeaderTools>
            </AppHeader>

            <AppBody>
              <Sidebar>
                {navItems.map((n) => (
                  <NavItem key={n.label} $active={n.active}>
                    <NavGlyph $size={n.size}>{n.icon}</NavGlyph>
                    <NavLabel>{n.label}</NavLabel>
                  </NavItem>
                ))}
              </Sidebar>

              <Main>
                <MainRow>
                  <MainInner>
                    <FilterBar>
                      <FilterGroup $w={364}>
                        <FilterLabel>Focus Element</FilterLabel>
                        <FilterSelect>
                          Front Impact Airbag System
                          <SelectChevron />
                        </FilterSelect>
                      </FilterGroup>
                      <FilterGroup $w={268}>
                        <FilterLabel>Context Element</FilterLabel>
                        <FilterSelect>
                          Ford Mustang
                          <SelectChevron />
                        </FilterSelect>
                      </FilterGroup>
                      <FilterGroup $w={146}>
                        <FilterLabel>Format</FilterLabel>
                        <FilterSelect>
                          Default
                          <SelectChevron />
                        </FilterSelect>
                      </FilterGroup>
                      <ActiveDoc>
                        Active Document
                        <ActiveName>: Functional Safety Requir...</ActiveName>
                      </ActiveDoc>
                      <RoundTools>
                        <RoundTool><FaVine /></RoundTool>
                        <RoundTool><FaTint /></RoundTool>
                        <RoundTool><FaChartBar /></RoundTool>
                      </RoundTools>
                    </FilterBar>

                    <WorkRow>
                      <Toggle $w={42}><FaAngleDoubleRight /></Toggle>
                      <ResizeGrip />
                      <Panel>
                        <SearchRow>
                          <NativeSelect defaultValue="Select">
                            <option>Select</option>
                          </NativeSelect>
                          <SearchInput placeholder="Search" />
                        </SearchRow>
                        <GridArea>
                          <GridBody>
                            <TableClip>
                              <Table>
                                <colgroup>
                                  {columns.map((c, i) => (
                                    <col key={i} width={c.width} />
                                  ))}
                                </colgroup>
                                <thead>
                                  <tr>
                                    {columns.map((c, i) => (
                                      <HeadCell key={i} $turned={c.turned}>
                                        {c.turned ? <TurnedText>{c.title}</TurnedText> : c.title}
                                      </HeadCell>
                                    ))}
                                  </tr>
                                </thead>
                                <tbody>
                                  <tr>
                                    <BodyCell $tone="plain">SG-FIAS-0002</BodyCell>
                                    <BodyCell $tone="hot" $center $strong>D</BodyCell>
                                    <BodyCell $tone="plain">sg B</BodyCell>
                                    <BodyCell $tone="plain" />
                                    <BodyCell $tone="plain" />
                                    <BodyCell $tone="plain" />
                                    <BodyCell $tone="warn"><FunctionDropdown /></BodyCell>
                                    <BodyCell $tone="warn">REQ-FIAS0016</BodyCell>
                                    <BodyCell $tone="warn" $color="#a98235">FSR R1</BodyCell>
                                    <BodyCell $tone="warn" $center>D</BodyCell>
                                    <BodyCell $tone="warn" />
                                    <BodyCell $tone="warn" />
                                    <BodyCell $tone="warn" />
                                    <BodyCell $tone="warn" />
                                  </tr>
                                </tbody>
                              </Table>
                            </TableClip>
                            <VTrack $h={566} $pad={11}>
                              <ArrowUp />
                              <VThumb $h={446} $mt={9} />
                              <ArrowDown $mt={71} />
                            </VTrack>
                          </GridBody>
                          <HTrack>
                            <ArrowLeftHead />
                            <HThumb />
                            <ArrowRightHead />
                          </HTrack>
                        </GridArea>
                        <Toolbar>
                          <GridButton><FaTh /></GridButton>
                          {toolButtons.map((b) => (
                            <ToolButton key={b.label}>
                              {b.icon}
                              {b.label}
                            </ToolButton>
                          ))}
                        </Toolbar>
                      </Panel>
                      <VTrack $h={714} $mt={10} $pad={10}>
                        <ArrowUp />
                        <VThumb $h={619} $mt={9} />
                        <ArrowDown $mt={48} />
                      </VTrack>
                      <Toggle $w={39} $ml={10}><FaAngleDoubleLeft /></Toggle>
                    </WorkRow>
                  </MainInner>
                  <VTrack $h={792} $pad={5}>
                    <ArrowUp />
                    <VThumb $h={735} />
                    <ArrowDown $mt={15} />
                  </VTrack>
                </MainRow>
                <BottomStrip />
              </Main>
            </AppBody>
          </AppWindow>
        </LeftColumn>

        <RightRail>
          <RailIcon><RailSearch /></RailIcon>
          <RailIcon $mt={29}><TeamsIcon /></RailIcon>
          <RailRule />
          <RailIcon $mt={27}><Plus size={20} strokeWidth={1.4} /></RailIcon>
          <RailRule $auto />
          <RailIcon><Settings size={22} strokeWidth={1.3} /></RailIcon>
        </RightRail>
      </BodyRow>
    </Page>
  );
};

export default App;
